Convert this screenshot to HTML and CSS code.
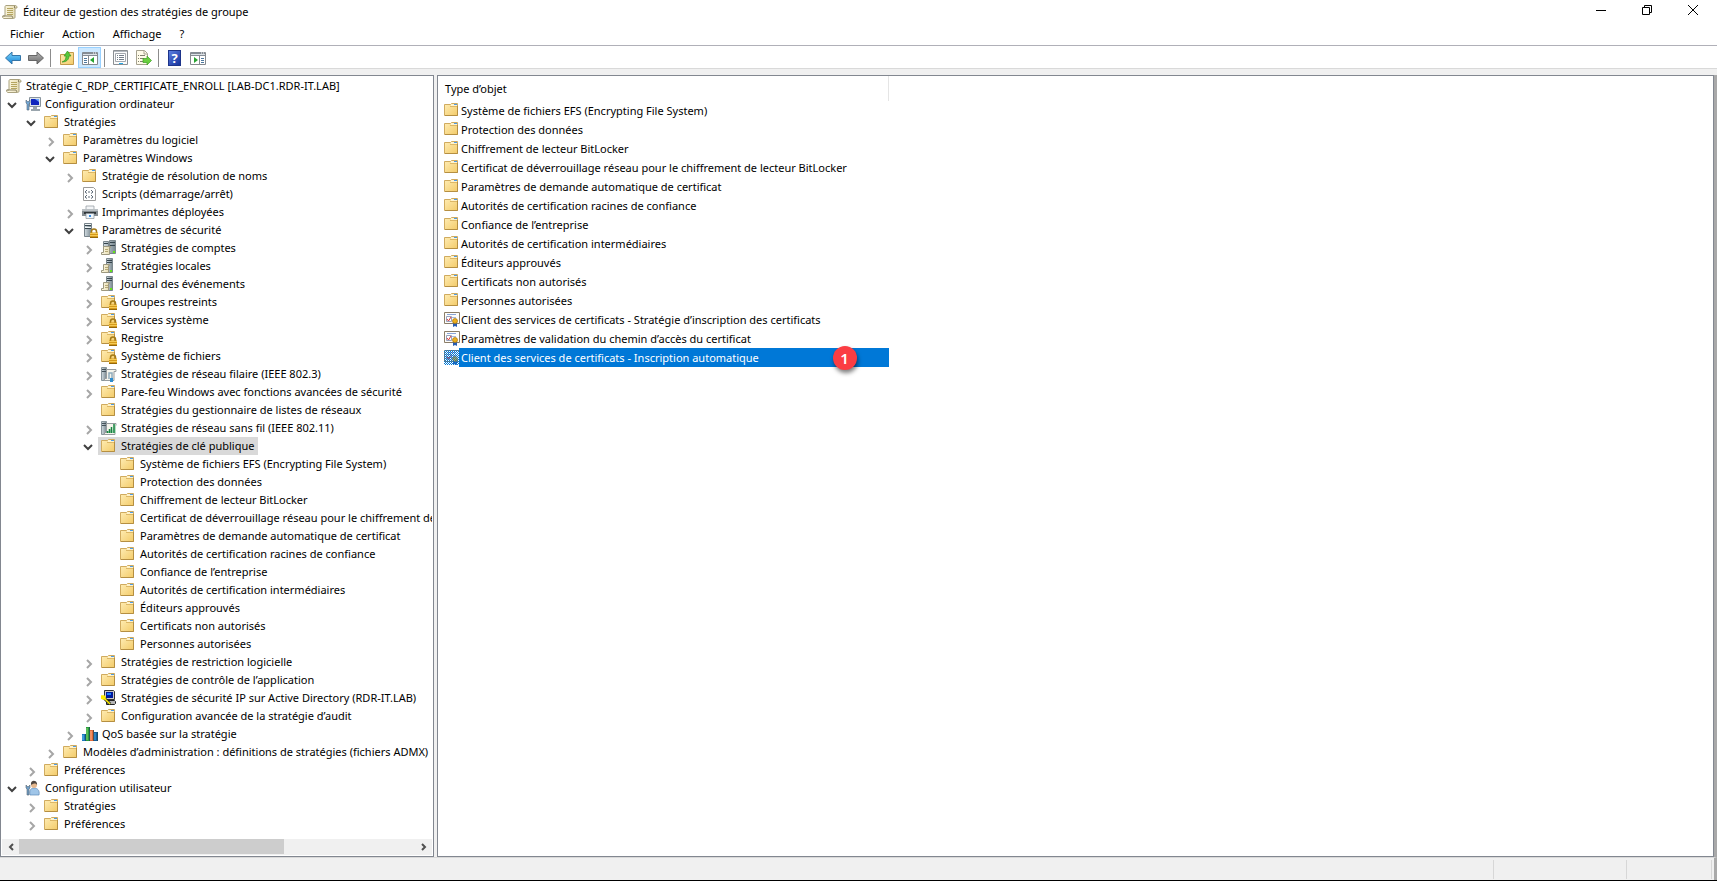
FILE: index.html
```html
<!DOCTYPE html>
<html lang="fr">
<head>
    <meta charset="utf-8">
    <title>Éditeur de gestion des stratégies de groupe</title>
    <link rel="stylesheet" href="styles.css">
</head>
<body>
<svg class="sprite" width="0" height="0" aria-hidden="true">
    <defs>
        <linearGradient id="gFolder" x1="0" y1="0" x2="1" y2="1"><stop offset="0" stop-color="#ffedb5"/><stop offset="1" stop-color="#f3cb69"/></linearGradient>
        <linearGradient id="gPaper" x1="0" y1="0" x2="1" y2="0"><stop offset="0" stop-color="#fffbe6"/><stop offset="1" stop-color="#e4d9ae"/></linearGradient>
        <linearGradient id="gServer" x1="0" y1="0" x2="1" y2="0"><stop offset="0" stop-color="#d3dde2"/><stop offset="1" stop-color="#77868e"/></linearGradient>
        <linearGradient id="gBlue" x1="0" y1="0" x2="0" y2="1"><stop offset="0" stop-color="#7fd6fb"/><stop offset="1" stop-color="#1583d6"/></linearGradient>
        <linearGradient id="gGrey" x1="0" y1="0" x2="0" y2="1"><stop offset="0" stop-color="#b5b5b5"/><stop offset="1" stop-color="#6b6b6b"/></linearGradient>
        <pattern id="dither" width="2" height="2" patternUnits="userSpaceOnUse"><path d="M0 0h1v1H0zM1 1h1v1H1z" fill="#0078d7"/></pattern>
    </defs>
    <symbol id="folder" viewBox="0 0 16 16">
        <path d="M.5 2.500h6l1-1h6v12H.5z" fill="url(#gFolder)" stroke="#d0ab5f"/>
        <path d="M7 2h6v2H7z" fill="#fff3cd"/><path d="M10 2h3v1h-3z" fill="#4d9be6"/>
        <path d="M6 4.500h7" stroke="#dcb766"/><path d="M1 13.500h12.500V4" fill="none" stroke="#b58f42"/>
    </symbol>
    <symbol id="lock" viewBox="0 0 16 16">
        <path d="M9.500 11V9.500a2.500 2.500 0 0 1 5 0V11" fill="none" stroke="#a37a17" stroke-width="1.500"/>
        <path d="M8 10.500h8V16H8z" fill="#d69a1c"/><path d="M8 11.500h8M8 13.500h8" stroke="#f4cb55"/><path d="M8 15.500h8" stroke="#956809"/>
    </symbol>
    <symbol id="folder-lock" viewBox="0 0 16 16"><use href="#folder"/><use href="#lock"/></symbol>
    <symbol id="scroll" viewBox="0 0 16 16">
        <path d="M4 1.500h9.500c1 0 1.500 1 1.500 2.500h-2v9c0 1-.7 1.500-1.500 1.500H2c-1 0-1.500-1-1.500-2.500H3V3c0-1 .5-1.500 1-1.500z" fill="url(#gPaper)" stroke="#aaa27f"/>
        <path d="M5 4.500h6M5 6.500h6M5 8.500h6M5 10.500h6" stroke="#b5a55f"/>
        <path d="M1 12h9l1 2" fill="none" stroke="#8b8467"/><path d="M12.500 4V2" stroke="#8b8467"/>
    </symbol>
    <symbol id="computer" viewBox="0 0 16 16">
        <path d="M4.500 1.500h11v9h-11z" fill="#dfe5ea" stroke="#89949d"/><path d="M6 3h8v6H6z" fill="#1026bd"/><path d="M10 3h4v3z" fill="#6aa5fa"/>
        <path d="M8 11h4v2H8zM6 13h9v2H6z" fill="#9aa5ad"/><path d="M1 4v3l1 1v6h2V8l1-1V4L3 6z" fill="#73a6d3" stroke="#526777" stroke-width=".6"/>
    </symbol>
    <symbol id="user" viewBox="0 0 16 16">
        <path d="M5 15c-1-5 1-7 4-7s6 2 5 7z" fill="#9fc5e8" stroke="#5d8ab8" stroke-width=".7"/><circle cx="9" cy="5" r="3" fill="#e5b78d"/>
        <path d="M6 5c-1-6 7-5 6 0-1-2-3-2-6 0z" fill="#4e453e"/><path d="M1 5v3l1 1v6h2V9l1-1V5L3 7z" fill="#6f9ec7" stroke="#56636f" stroke-width=".6"/>
    </symbol>
    <symbol id="script" viewBox="0 0 16 16">
        <path d="M1.500 1.500h10l2 2v11h-12z" fill="#fff" stroke="#9a9a9a"/><path d="M5 4L3 6l2 1.500M9 4l2 2-2 1.500M6 6h2M5 9l-2 2 2 1.500M9 9l2 2-2 1.500M6 11h2" fill="none" stroke="#5c6875"/>
    </symbol>
    <symbol id="printer" viewBox="0 0 16 16">
        <path d="M4 2h8v4H4z" fill="#f3f5f7" stroke="#8e969c" stroke-width=".7"/><path d="M0 5h16v7H0z" fill="#858d92"/><path d="M0 5h16v2H0z" fill="#bac0c4"/><path d="M2 8h12v2H2z" fill="#30363a"/>
        <path d="M4 9.500h8v5H4z" fill="#eff6fc" stroke="#8a9298" stroke-width=".7"/><path d="M7 11h2v2H7z" fill="#3a8ce0"/>
    </symbol>
    <symbol id="server" viewBox="0 0 16 16">
        <path d="M2.500 1.500h7v13h-7z" fill="url(#gServer)" stroke="#77838a"/><path d="M3 3.500h6M3 6.500h6" stroke="#394850"/><path d="M3 2.500h6M3 5.500h6" stroke="#eef3f5"/>
    </symbol>
    <symbol id="server-lock" viewBox="0 0 16 16"><use href="#server"/><use href="#lock"/></symbol>
    <symbol id="server-doc" viewBox="0 0 16 16">
        <path d="M5.500.5h6v14h-6z" fill="url(#gServer)" stroke="#7b878d"/><path d="M6 2.500h5M6 4.500h5" stroke="#35444c"/><path d="M9 12h2v2H9z" fill="#63e21b"/>
        <path d="M2.500 6.500h6v1h-1v7H.5v-2h2z" fill="url(#gPaper)" stroke="#9d987f"/><path d="M4 9.500h3M4 11.500h3" stroke="#b6a976"/>
    </symbol>
    <symbol id="servers-doc" viewBox="0 0 16 16">
        <path d="M2.500 1.500h5v9h-5zM8.500.5h6v13h-6z" fill="url(#gServer)" stroke="#7b878d"/><path d="M3 3.500h4M9 2.500h5M9 5.500h5" stroke="#35444c"/><path d="M12 11h2v2h-2z" fill="#63e21b"/>
        <path d="M2.500 6.500h7v1h-1v7H.5v-2h2z" fill="url(#gPaper)" stroke="#9d987f"/><path d="M4 9.500h3M4 11.500h3" stroke="#b6a976"/>
    </symbol>
    <symbol id="wired" viewBox="0 0 16 16">
        <path d="M.5 1.500h5v13h-5z" fill="url(#gServer)" stroke="#87949a"/><path d="M1 3.500h4M1 5.500h4" stroke="#445159"/>
        <path d="M5.500 3.500h9.500v2h-2v9H3.500v-2h2z" fill="#f5f4ec" stroke="#969b9e"/><path d="M8 13V7h3v6" fill="none" stroke="#8eaabc" stroke-width="1.500"/><path d="M9 12h3v4H9z" fill="#2e8cce"/>
    </symbol>
    <symbol id="wifi" viewBox="0 0 16 16">
        <path d="M.5 1.500h5v13h-5z" fill="url(#gServer)" stroke="#87949a"/><path d="M1 3.500h4M1 5.500h4" stroke="#445159"/>
        <path d="M5.500 3.500h9.500v2h-1v9H3.500v-2h2z" fill="#f5f4ec" stroke="#969b9e"/><path d="M6 13l3-3 2 1 4-7v9z" fill="#b9dfc4"/><path d="M6.500 13v-2M8.500 13v-4M10.500 13V7M13 13V4" stroke="#168440" stroke-width="1.500"/>
    </symbol>
    <symbol id="ipsec" viewBox="0 0 16 16">
        <path d="M3.500.5h9l1 1v8h-10z" fill="#c9c9c9" stroke="#333"/><path d="M5 2h7v6H5z" fill="#001a9c"/><path d="M6 3h4v2H6z" fill="#1680ff"/>
        <path d="M5.500 10.500h8l1 1v2l-1 1h-8z" fill="#b5b5b5" stroke="#222"/><path d="M3 8l6 6" stroke="#222" stroke-width="3"/><path d="M0 6h3l1 1v2H2L0 8zM3 8l6 6" fill="#ffef00" stroke="#ffef00" stroke-width="1.500"/>
    </symbol>
    <symbol id="qos" viewBox="0 0 16 16">
        <path d="M0 8h4v7H0z" fill="#1a78bc"/><path d="M4 1h4v14H4z" fill="#2b9c3c"/><path d="M8 4h4v11H8z" fill="#e06a3b"/><path d="M12 6h4v9h-4z" fill="#145f9c"/>
        <path d="M1 9v5" stroke="#67c1f2"/><path d="M5 2v12" stroke="#83df74"/><path d="M9 5v9" stroke="#ffb68c"/><path d="M13 7v7" stroke="#45a7e5"/><path d="M3.500 8v7M7.500 1v14M11.500 4v11M15.500 6v9" stroke="#174254" stroke-width=".7"/>
    </symbol>
    <symbol id="cert" viewBox="0 0 16 16">
        <path d="M.5 1.500h15v11H.5z" fill="#fdfdfb" stroke="#8a7d68"/><path d="M3 3.500h9" stroke="#88a4d8"/><path d="M8 6.500h4" stroke="#a9b9d6"/><path d="M2.500 5.500h5v5h-5z" fill="#fff" stroke="#98a2bd"/><path d="M3 8l1.500 2L7 6" fill="none" stroke="#d63b3b"/>
        <path d="M9 11v5l2-1 2 1v-5z" fill="#285cb3"/><circle cx="11" cy="10" r="2.500" fill="#edae1c" stroke="#a77407" stroke-width=".7"/>
    </symbol>
    <symbol id="cert-selected" viewBox="0 0 16 16"><use href="#cert"/><path d="M0 1h16v15H0z" fill="url(#dither)" shape-rendering="crispEdges"/></symbol>
    <symbol id="down" viewBox="0 0 16 16"><path d="M4 7l4 4 4-4" fill="none" stroke="#404040" stroke-width="2"/></symbol>
    <symbol id="right" viewBox="0 0 16 16"><path d="M7 6l4 4-4 4" fill="none" stroke="#a6a6a6" stroke-width="2"/></symbol>
    <symbol id="arrow-left" viewBox="0 0 16 16"><path d="M.5 8L7 2v3.500h8.500v5H7V14z" fill="url(#gBlue)" stroke="#3475a8"/></symbol>
    <symbol id="arrow-right" viewBox="0 0 16 16"><path d="M15.500 8L9 2v3.500H.5v5H9V14z" fill="url(#gGrey)" stroke="#666"/></symbol>
    <symbol id="up-folder" viewBox="0 0 16 16">
        <path d="M1.500 4.500h6l1-2h6v12h-13z" fill="url(#gFolder)" stroke="#c39a4a"/><path d="M3 12c3-1 4-3 4-6H5l3.500-5L12 6h-2c0 4-3 6-7 6z" fill="#58c73a" stroke="#288c1c" stroke-width=".6"/>
    </symbol>
    <symbol id="pane-left" viewBox="0 0 16 16">
        <path d="M.5 2.500h15v12H.5z" fill="#fff" stroke="#85898e"/><path d="M1 2h14v4H1z" fill="#858c94"/><path d="M1 4.500h14" stroke="#dce1e6"/><path d="M11 3h1M13 3h1" stroke="#fff"/>
        <path d="M6.500 6v8" stroke="#85898e"/><path d="M2 8.500h3M2 10.500h3M2 12.500h3" stroke="#4f789e"/><path d="M12 7v6l-4-3z" fill="#27a330"/>
    </symbol>
    <symbol id="pane-right" viewBox="0 0 16 16">
        <path d="M.5 2.500h15v12H.5z" fill="#fff" stroke="#85898e"/><path d="M1 2h14v4H1z" fill="#858c94"/><path d="M1 4.500h14" stroke="#dce1e6"/><path d="M11 3h1M13 3h1" stroke="#fff"/>
        <path d="M9.500 6v8" stroke="#85898e"/><path d="M11 8.500h3M11 10.500h3M11 12.500h3" stroke="#4f789e"/><path d="M4 7v6l4-3z" fill="#27a330"/>
    </symbol>
    <symbol id="props" viewBox="0 0 16 16">
        <path d="M.5.5h14v14H.5z" fill="#fbfbfb" stroke="#8b8f93"/><path d="M1 1.500h13" stroke="#b4bac0"/><path d="M2.500 3.500h10v8h-10z" fill="#fff" stroke="#a3a8ae"/><path d="M4 5.500h1M6 5.500h5M4 7.500h1M6 7.500h5M4 9.500h1M6 9.500h5" stroke="#747e89"/><path d="M6 13.500h4" stroke="#27a8e5"/>
    </symbol>
    <symbol id="export" viewBox="0 0 16 16">
        <path d="M.5.5h8l3 3v11H.5z" fill="#fffbe9" stroke="#a6a290"/><path d="M8 1v3h3" fill="none" stroke="#a6a290"/><path d="M2 5.500h1M4 5.500h5M2 8.500h1M4 8.500h4M2 11.500h1M4 11.500h4" stroke="#80806f"/><path d="M7 8.500h4V6l4.500 4.500L11 15v-2.500H7z" fill="#69cf3f" stroke="#3e9e27" stroke-width=".7"/>
    </symbol>
</svg>

<header class="titlebar">
    <svg class="icon"><use href="#scroll"/></svg>
    <h1>Éditeur de gestion des stratégies de groupe</h1>
    <div class="window-buttons">
        <button aria-label="Réduire"><svg viewBox="0 0 12 12"><path d="M1 6.500h10"/></svg></button>
        <button aria-label="Restaurer"><svg viewBox="0 0 12 12"><path d="M1.500 3.500h7v7h-7zM3.500 3V1.500h7v7H9"/></svg></button>
        <button aria-label="Fermer"><svg viewBox="0 0 12 12"><path d="M1 1l10 10M11 1L1 11"/></svg></button>
    </div>
</header>
<nav class="menubar">
    <button>Fichier</button>
    <button>Action</button>
    <button>Affichage</button>
    <button>?</button>
</nav>
<div class="toolbar">
    <button aria-label="Précédent"><svg class="icon"><use href="#arrow-left"/></svg></button>
    <button aria-label="Suivant"><svg class="icon"><use href="#arrow-right"/></svg></button>
    <span class="separator"></span>
    <button aria-label="Dossier parent"><svg class="icon"><use href="#up-folder"/></svg></button>
    <button class="active" aria-label="Arborescence"><svg class="icon"><use href="#pane-left"/></svg></button>
    <span class="separator"></span>
    <button aria-label="Propriétés"><svg class="icon"><use href="#props"/></svg></button>
    <button aria-label="Exporter la liste"><svg class="icon"><use href="#export"/></svg></button>
    <span class="separator"></span>
    <button aria-label="Aide"><span class="help">?</span></button>
    <button aria-label="Volet Actions"><svg class="icon"><use href="#pane-right"/></svg></button>
</div>

<main class="panes">
    <section class="tree-pane">
        <div class="tree">
            <div class="row"><span class="node"><svg class="icon"><use href="#scroll"/></svg>Stratégie C_RDP_CERTIFICATE_ENROLL [LAB-DC1.RDR-IT.LAB]</span></div>
            <ul class="first">
                <li><div class="row"><button class="toggle" aria-label="Réduire"><svg class="icon"><use href="#down"/></svg></button><span class="node"><svg class="icon"><use href="#computer"/></svg>Configuration ordinateur</span></div>
                <ul>
                    <li><div class="row"><button class="toggle" aria-label="Réduire"><svg class="icon"><use href="#down"/></svg></button><span class="node"><svg class="icon"><use href="#folder"/></svg>Stratégies</span></div>
                    <ul>
                        <li><div class="row"><button class="toggle" aria-label="Développer"><svg class="icon"><use href="#right"/></svg></button><span class="node"><svg class="icon"><use href="#folder"/></svg>Paramètres du logiciel</span></div></li>
                        <li><div class="row"><button class="toggle" aria-label="Réduire"><svg class="icon"><use href="#down"/></svg></button><span class="node"><svg class="icon"><use href="#folder"/></svg>Paramètres Windows</span></div>
                        <ul>
                            <li><div class="row"><button class="toggle" aria-label="Développer"><svg class="icon"><use href="#right"/></svg></button><span class="node"><svg class="icon"><use href="#folder"/></svg>Stratégie de résolution de noms</span></div></li>
                            <li><div class="row"><span class="toggle"></span><span class="node"><svg class="icon"><use href="#script"/></svg>Scripts (démarrage/arrêt)</span></div></li>
                            <li><div class="row"><button class="toggle" aria-label="Développer"><svg class="icon"><use href="#right"/></svg></button><span class="node"><svg class="icon"><use href="#printer"/></svg>Imprimantes déployées</span></div></li>
                            <li><div class="row"><button class="toggle" aria-label="Réduire"><svg class="icon"><use href="#down"/></svg></button><span class="node"><svg class="icon"><use href="#server-lock"/></svg>Paramètres de sécurité</span></div>
                            <ul>
                                <li><div class="row"><button class="toggle" aria-label="Développer"><svg class="icon"><use href="#right"/></svg></button><span class="node"><svg class="icon"><use href="#servers-doc"/></svg>Stratégies de comptes</span></div></li>
                                <li><div class="row"><button class="toggle" aria-label="Développer"><svg class="icon"><use href="#right"/></svg></button><span class="node"><svg class="icon"><use href="#server-doc"/></svg>Stratégies locales</span></div></li>
                                <li><div class="row"><button class="toggle" aria-label="Développer"><svg class="icon"><use href="#right"/></svg></button><span class="node"><svg class="icon"><use href="#server-doc"/></svg>Journal des événements</span></div></li>
                                <li><div class="row"><button class="toggle" aria-label="Développer"><svg class="icon"><use href="#right"/></svg></button><span class="node"><svg class="icon"><use href="#folder-lock"/></svg>Groupes restreints</span></div></li>
                                <li><div class="row"><button class="toggle" aria-label="Développer"><svg class="icon"><use href="#right"/></svg></button><span class="node"><svg class="icon"><use href="#folder-lock"/></svg>Services système</span></div></li>
                                <li><div class="row"><button class="toggle" aria-label="Développer"><svg class="icon"><use href="#right"/></svg></button><span class="node"><svg class="icon"><use href="#folder-lock"/></svg>Registre</span></div></li>
                                <li><div class="row"><button class="toggle" aria-label="Développer"><svg class="icon"><use href="#right"/></svg></button><span class="node"><svg class="icon"><use href="#folder-lock"/></svg>Système de fichiers</span></div></li>
                                <li><div class="row"><button class="toggle" aria-label="Développer"><svg class="icon"><use href="#right"/></svg></button><span class="node"><svg class="icon"><use href="#wired"/></svg>Stratégies de réseau filaire (IEEE 802.3)</span></div></li>
                                <li><div class="row"><button class="toggle" aria-label="Développer"><svg class="icon"><use href="#right"/></svg></button><span class="node"><svg class="icon"><use href="#folder"/></svg>Pare-feu Windows avec fonctions avancées de sécurité</span></div></li>
                                <li><div class="row"><span class="toggle"></span><span class="node"><svg class="icon"><use href="#folder"/></svg>Stratégies du gestionnaire de listes de réseaux</span></div></li>
                                <li><div class="row"><button class="toggle" aria-label="Développer"><svg class="icon"><use href="#right"/></svg></button><span class="node"><svg class="icon"><use href="#wifi"/></svg>Stratégies de réseau sans fil (IEEE 802.11)</span></div></li>
                                <li><div class="row"><button class="toggle" aria-label="Réduire"><svg class="icon"><use href="#down"/></svg></button><span class="node current"><svg class="icon"><use href="#folder"/></svg>Stratégies de clé publique</span></div>
                                <ul>
                                    <li><div class="row"><span class="toggle"></span><span class="node"><svg class="icon"><use href="#folder"/></svg>Système de fichiers EFS (Encrypting File System)</span></div></li>
                                    <li><div class="row"><span class="toggle"></span><span class="node"><svg class="icon"><use href="#folder"/></svg>Protection des données</span></div></li>
                                    <li><div class="row"><span class="toggle"></span><span class="node"><svg class="icon"><use href="#folder"/></svg>Chiffrement de lecteur BitLocker</span></div></li>
                                    <li><div class="row"><span class="toggle"></span><span class="node"><svg class="icon"><use href="#folder"/></svg>Certificat de déverrouillage réseau pour le chiffrement de lecteur BitLocker</span></div></li>
                                    <li><div class="row"><span class="toggle"></span><span class="node"><svg class="icon"><use href="#folder"/></svg>Paramètres de demande automatique de certificat</span></div></li>
                                    <li><div class="row"><span class="toggle"></span><span class="node"><svg class="icon"><use href="#folder"/></svg>Autorités de certification racines de confiance</span></div></li>
                                    <li><div class="row"><span class="toggle"></span><span class="node"><svg class="icon"><use href="#folder"/></svg>Confiance de l’entreprise</span></div></li>
                                    <li><div class="row"><span class="toggle"></span><span class="node"><svg class="icon"><use href="#folder"/></svg>Autorités de certification intermédiaires</span></div></li>
                                    <li><div class="row"><span class="toggle"></span><span class="node"><svg class="icon"><use href="#folder"/></svg>Éditeurs approuvés</span></div></li>
                                    <li><div class="row"><span class="toggle"></span><span class="node"><svg class="icon"><use href="#folder"/></svg>Certificats non autorisés</span></div></li>
                                    <li><div class="row"><span class="toggle"></span><span class="node"><svg class="icon"><use href="#folder"/></svg>Personnes autorisées</span></div></li>
                                </ul></li>
                                <li><div class="row"><button class="toggle" aria-label="Développer"><svg class="icon"><use href="#right"/></svg></button><span class="node"><svg class="icon"><use href="#folder"/></svg>Stratégies de restriction logicielle</span></div></li>
                                <li><div class="row"><button class="toggle" aria-label="Développer"><svg class="icon"><use href="#right"/></svg></button><span class="node"><svg class="icon"><use href="#folder"/></svg>Stratégies de contrôle de l’application</span></div></li>
                                <li><div class="row"><button class="toggle" aria-label="Développer"><svg class="icon"><use href="#right"/></svg></button><span class="node"><svg class="icon"><use href="#ipsec"/></svg>Stratégies de sécurité IP sur Active Directory (RDR-IT.LAB)</span></div></li>
                                <li><div class="row"><button class="toggle" aria-label="Développer"><svg class="icon"><use href="#right"/></svg></button><span class="node"><svg class="icon"><use href="#folder"/></svg>Configuration avancée de la stratégie d’audit</span></div></li>
                            </ul></li>
                            <li><div class="row"><button class="toggle" aria-label="Développer"><svg class="icon"><use href="#right"/></svg></button><span class="node"><svg class="icon"><use href="#qos"/></svg>QoS basée sur la stratégie</span></div></li>
                        </ul></li>
                        <li><div class="row"><button class="toggle" aria-label="Développer"><svg class="icon"><use href="#right"/></svg></button><span class="node"><svg class="icon"><use href="#folder"/></svg>Modèles d’administration : définitions de stratégies (fichiers ADMX)</span></div></li>
                    </ul></li>
                    <li><div class="row"><button class="toggle" aria-label="Développer"><svg class="icon"><use href="#right"/></svg></button><span class="node"><svg class="icon"><use href="#folder"/></svg>Préférences</span></div></li>
                </ul></li>
                <li><div class="row"><button class="toggle" aria-label="Réduire"><svg class="icon"><use href="#down"/></svg></button><span class="node"><svg class="icon"><use href="#user"/></svg>Configuration utilisateur</span></div>
                <ul>
                    <li><div class="row"><button class="toggle" aria-label="Développer"><svg class="icon"><use href="#right"/></svg></button><span class="node"><svg class="icon"><use href="#folder"/></svg>Stratégies</span></div></li>
                    <li><div class="row"><button class="toggle" aria-label="Développer"><svg class="icon"><use href="#right"/></svg></button><span class="node"><svg class="icon"><use href="#folder"/></svg>Préférences</span></div></li>
                </ul></li>
            </ul>
        </div>
        <div class="scrollbar">
            <button aria-label="Défiler à gauche"><svg viewBox="0 0 8 8"><path d="M6 1L3 4l3 3"/></svg></button>
            <div class="track"><div class="thumb"></div></div>
            <button aria-label="Défiler à droite"><svg viewBox="0 0 8 8"><path d="M2 1l3 3-3 3"/></svg></button>
        </div>
    </section>

    <section class="list-pane">
        <table class="list">
            <colgroup>
                <col class="pic-col">
                <col>
            </colgroup>
            <thead>
                <tr><th colspan="2" scope="col">Type d’objet</th></tr>
            </thead>
            <tbody>
                <tr><td class="pic"><svg class="icon"><use href="#folder"/></svg></td><td>Système de fichiers EFS (Encrypting File System)</td></tr>
                <tr><td class="pic"><svg class="icon"><use href="#folder"/></svg></td><td>Protection des données</td></tr>
                <tr><td class="pic"><svg class="icon"><use href="#folder"/></svg></td><td>Chiffrement de lecteur BitLocker</td></tr>
                <tr><td class="pic"><svg class="icon"><use href="#folder"/></svg></td><td>Certificat de déverrouillage réseau pour le chiffrement de lecteur BitLocker</td></tr>
                <tr><td class="pic"><svg class="icon"><use href="#folder"/></svg></td><td>Paramètres de demande automatique de certificat</td></tr>
                <tr><td class="pic"><svg class="icon"><use href="#folder"/></svg></td><td>Autorités de certification racines de confiance</td></tr>
                <tr><td class="pic"><svg class="icon"><use href="#folder"/></svg></td><td>Confiance de l’entreprise</td></tr>
                <tr><td class="pic"><svg class="icon"><use href="#folder"/></svg></td><td>Autorités de certification intermédiaires</td></tr>
                <tr><td class="pic"><svg class="icon"><use href="#folder"/></svg></td><td>Éditeurs approuvés</td></tr>
                <tr><td class="pic"><svg class="icon"><use href="#folder"/></svg></td><td>Certificats non autorisés</td></tr>
                <tr><td class="pic"><svg class="icon"><use href="#folder"/></svg></td><td>Personnes autorisées</td></tr>
                <tr><td class="pic"><svg class="icon"><use href="#cert"/></svg></td><td>Client des services de certificats - Stratégie d’inscription des certificats</td></tr>
                <tr><td class="pic"><svg class="icon"><use href="#cert"/></svg></td><td>Paramètres de validation du chemin d’accès du certificat</td></tr>
                <tr class="selected"><td class="pic"><svg class="icon"><use href="#cert-selected"/></svg></td><td>Client des services de certificats - Inscription automatique<span class="badge">1</span></td></tr>
            </tbody>
        </table>
    </section>
</main>

<footer class="statusbar">
    <div class="cell main-cell"></div>
    <div class="cell wide"></div>
    <div class="cell narrow"></div>
</footer>
</body>
</html>
```

FILE: styles.css
```css
* {
    box-sizing: border-box;
}
body {
    margin: 0;
    height: 100vh;
    display: flex;
    flex-direction: column;
    overflow: hidden;
    background: #f0f0f0;
    color: #000;
    font-family: "Noto Sans", "Open Sans", sans-serif;
    font-size: 11px;
    line-height: 18px;
    border-bottom: 1px solid #000;
}
button {
    margin: 0;
    padding: 0;
    border: 0;
    background: none;
    color: inherit;
    font: inherit;
}
.sprite {
    position: absolute;
}
.icon {
    display: block;
    flex: none;
    width: 16px;
    height: 16px;
}

/* barre de titre */
.titlebar {
    display: flex;
    align-items: center;
    height: 24px;
    padding: 0 1px 0 2px;
    background: #fff;
}
.titlebar h1 {
    flex: 1;
    margin: 0 0 0 5px;
    font-size: 11px;
    font-weight: normal;
}
.window-buttons {
    display: flex;
    align-self: flex-start;
}
.window-buttons button {
    display: flex;
    align-items: center;
    justify-content: center;
    width: 46px;
    height: 20px;
}
.window-buttons svg {
    width: 12px;
    height: 12px;
    fill: none;
    stroke: #000;
}

.menubar {
    display: flex;
    gap: 2px;
    height: 22px;
    padding: 0 0 2px 2px;
    background: #fff;
    border-bottom: 1px solid #b0b0b8;
}
.menubar button {
    padding: 0 8px;
    line-height: 18px;
}

/* barre d'outils */
.toolbar {
    display: flex;
    align-items: center;
    height: 23px;
    padding: 1px 0 0 1px;
    background: #fff;
    border-bottom: 1px solid #d9d9d9;
}
.toolbar button {
    display: flex;
    align-items: center;
    justify-content: center;
    width: 23px;
    height: 21px;
}
.toolbar .active {
    background: #cce8ff;
    border: 1px solid #99d1ff;
}
.separator {
    width: 1px;
    height: 18px;
    margin: 0 4px 0 3px;
    background: #8c8c8c;
}
.help {
    width: 13px;
    height: 16px;
    background: linear-gradient(135deg, #5c7fe0, #16329c);
    border: 1px solid #1d348a;
    color: #fff;
    font-size: 13px;
    font-weight: bold;
    line-height: 14px;
}

.panes {
    flex: 1;
    min-height: 0;
    display: flex;
    gap: 3px;
    margin-top: 6px;
    border-right: 3px solid #a9a9a9;
}
.tree-pane,
.list-pane {
    background: #fff;
    border: 1px solid #828790;
    overflow: hidden;
}
.tree-pane {
    flex: 0 0 434px;
    display: flex;
    flex-direction: column;
    padding: 1px;
}
.list-pane {
    flex: 1;
}

/* arborescence */
.tree {
    flex: 1;
    min-height: 0;
    overflow: hidden;
    padding-left: 1px;
}
.tree ul {
    margin: 0;
    padding: 0 0 0 19px;
    list-style: none;
}
.tree .first {
    padding-left: 1px;
}
.row {
    display: flex;
    height: 18px;
    white-space: nowrap;
}
.toggle {
    display: flex;
    align-items: center;
    flex: none;
    width: 18px;
}
.node {
    display: flex;
    align-items: center;
    gap: 4px;
    padding: 0 4px 0 3px;
}
.current {
    background: #d9d9d9;
}

.scrollbar {
    display: flex;
    height: 16px;
    background: #f0f0f0;
}
.scrollbar button {
    display: flex;
    align-items: center;
    justify-content: center;
    width: 17px;
}
.scrollbar svg {
    width: 8px;
    height: 8px;
    fill: none;
    stroke: #505050;
    stroke-width: 2;
}
.track {
    flex: 1;
}
.thumb {
    width: 67%;
    height: 15px;
    background: #cdcdcd;
}

/* liste */
.list {
    width: 451px;
    border-collapse: collapse;
    table-layout: fixed;
}
.pic-col {
    width: 21px;
}
.list th {
    height: 25px;
    padding: 0 7px;
    border-right: 1px solid #e5e5e5;
    font-weight: normal;
    text-align: left;
}
.list td {
    position: relative;
    height: 19px;
    padding: 0 2px;
    white-space: nowrap;
}
.list .pic {
    padding: 1px 0 0 6px;
    vertical-align: top;
}
.selected td {
    background: #0078d7;
    color: #fff;
}
.selected .pic {
    background: none;
}
.badge {
    position: absolute;
    top: -2px;
    right: 32px;
    width: 24px;
    height: 24px;
    border-radius: 50%;
    background: #fb3d43;
    box-shadow: 1px 3px 4px rgba(0, 0, 0, 0.5);
    font-size: 15px;
    font-weight: 600;
    line-height: 24px;
    text-align: center;
}

.statusbar {
    display: flex;
    height: 23px;
    padding: 2px 2px 1px 0;
    border-top: 1px solid #d9d9d9;
    border-right: 3px solid #a9a9a9;
}
.cell {
    border-right: 1px solid #d7d7d7;
}
.main-cell {
    flex: 1;
}
.wide {
    width: 133px;
}
.narrow {
    width: 85px;
}
```
